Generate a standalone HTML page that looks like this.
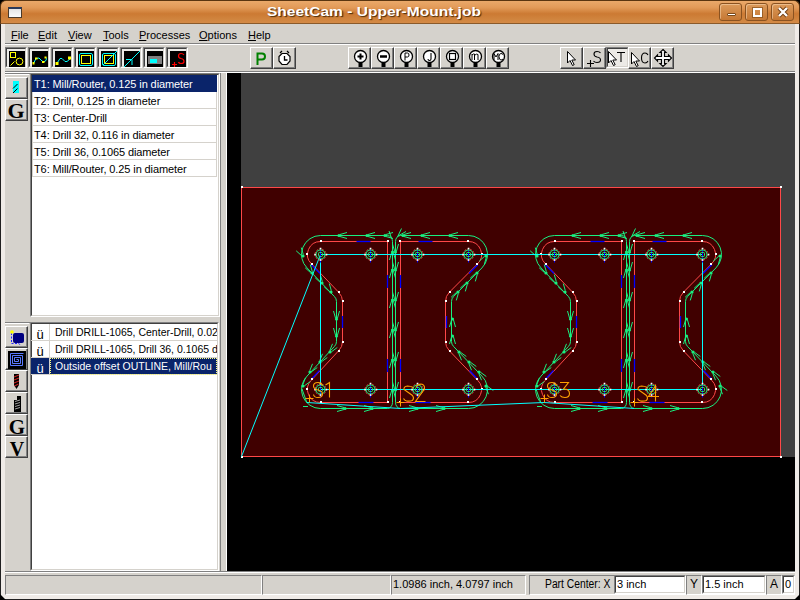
<!DOCTYPE html>
<html><head><meta charset="utf-8">
<style>
*{margin:0;padding:0;box-sizing:border-box}
html,body{width:800px;height:600px;overflow:hidden;background:#000;font-family:"Liberation Sans",sans-serif;}
.a{position:absolute}
#win{position:absolute;left:0;top:0;width:800px;height:600px;}
#bg{position:absolute;left:0;top:20px;width:800px;height:580px;background:#d5d2cc}
#title{position:absolute;left:0;top:0;width:800px;height:24px;background:linear-gradient(#eaa96a 0%,#e29a58 30%,#cc7a33 58%,#d0843e 82%,#d48a46 100%);border-radius:6px 6px 0 0;border:1px solid #5a3510;border-bottom:1px solid #8a5a2a}
#ttext{position:absolute;left:267px;top:4px;font:bold 13.5px "Liberation Sans",sans-serif;transform:scaleX(1.15);transform-origin:0 0;color:#fff;text-shadow:1px 1px 1px #4a2a08;white-space:nowrap}
.tb{position:absolute;top:3px;width:23px;height:18px;border:1px solid #8a5220;border-radius:3px;background:linear-gradient(#dc9a5a,#c57834);box-shadow:inset 1px 1px 0 rgba(255,230,200,.45)}
#lb{position:absolute;left:0;top:24px;width:5px;height:576px;background:#efebe7;border-left:1px solid #202020}
#rb{position:absolute;left:795px;top:24px;width:5px;height:576px;background:#efebe7;border-right:1px solid #202020}
#bb{position:absolute;left:0;top:595px;width:800px;height:5px;background:#efebe7;border-bottom:1px solid #202020}
.menu{position:absolute;top:29px;font-size:11px;color:#000;line-height:13px}
.menu u{text-decoration:underline;text-underline-offset:1px}
.ck{position:absolute;top:47px;width:22px;height:21px;border-top:1px solid #808080;border-left:1px solid #808080;border-right:1px solid #fff;border-bottom:1px solid #fff;background:#ecebe8}
.ck:before{content:"";position:absolute;left:0;top:0;right:0;bottom:0;border-top:1px solid #404040;border-left:1px solid #404040;border-right:1px solid #d5d2cc;border-bottom:1px solid #d5d2cc}
.ck svg{position:absolute;left:3px;top:3px}
.rb{position:absolute;top:47px;width:23px;height:22px;border-top:1px solid #fff;border-left:1px solid #fff;border-right:1px solid #404040;border-bottom:1px solid #404040;background:#d5d2cc}
.rb:before{content:"";position:absolute;left:0;top:0;right:0;bottom:0;border-right:1px solid #808080;border-bottom:1px solid #808080}
.rb svg{position:absolute;left:0;top:0}
.lt{position:absolute;left:5px;width:23px;height:23px;border-top:1px solid #fff;border-left:1px solid #fff;border-right:1px solid #404040;border-bottom:1px solid #404040;background:#d5d2cc}
.lt:before{content:"";position:absolute;left:0;top:0;right:0;bottom:0;border-right:1px solid #808080;border-bottom:1px solid #808080}
.lt svg{position:absolute;left:0;top:0}
.row{position:absolute;left:32px;width:185px;height:17px;border:1px solid #d5d2cc;border-top:none;font-size:11px;padding-left:1px;line-height:18px;white-space:nowrap;overflow:hidden;letter-spacing:-0.1px}
.sel{background:#0a246a;color:#fff;border-color:#0a246a}
.sp{position:absolute;top:575px;height:20px;border-top:1px solid #808080;border-left:1px solid #808080;border-right:1px solid #fff;border-bottom:1px solid #fff;font-size:11px;line-height:16px;white-space:nowrap}
.inp{position:absolute;top:575px;height:19px;background:#fff;border-top:1px solid #808080;border-left:1px solid #808080;border-right:1px solid #fff;border-bottom:1px solid #fff;font-size:11px;line-height:16px;padding-left:2px;white-space:nowrap;overflow:hidden}
.inp:before{content:"";position:absolute;left:0;top:0;right:0;bottom:0;border-top:1px solid #404040;border-left:1px solid #404040;border-right:1px solid #d5d2cc;border-bottom:1px solid #d5d2cc}
.sunk{position:absolute;background:#fff;border-top:1px solid #808080;border-left:1px solid #808080;border-right:1px solid #fff;border-bottom:1px solid #fff}
.sunk:before{content:"";position:absolute;left:0;top:0;right:0;bottom:0;border-top:1px solid #404040;border-left:1px solid #404040;border-right:1px solid #d5d2cc;border-bottom:1px solid #d5d2cc}
.lab{position:absolute;top:575px;height:19px;border:1px solid #fff;border-right-color:#808080;border-bottom-color:#808080;font-size:12px;line-height:17px;text-align:center}
</style></head><body>
<div id="win">
 <div id="bg"></div>
 <div id="title"></div>
 <div id="ttext">SheetCam - Upper-Mount.job</div>
 <div class="a" style="left:8px;top:7px;width:14px;height:11px;background:linear-gradient(#e4e4e4,#fafafa);border:1px solid #4a3a2a;border-top:2px solid #2a3a5a"></div>
 <div class="tb" style="left:719px"><div class="a" style="left:7px;top:9px;width:9px;height:3px;background:#fff;border:1px solid #7a4a1a;border-radius:1px"></div></div>
 <div class="tb" style="left:745px"><div class="a" style="left:7px;top:4px;width:9px;height:9px;border:2px solid #fff;outline:1px solid rgba(120,70,20,.6)"></div></div>
 <div class="tb" style="left:771px"><svg class="a" style="left:5px;top:2px" width="12" height="12"><path d="M2 2 L10 10 M10 2 L2 10" stroke="#6a3a10" stroke-width="4"/><path d="M2 2 L10 10 M10 2 L2 10" stroke="#fff" stroke-width="2.4"/></svg></div>
 <div id="lb"></div><div id="rb"></div><div id="bb"></div>
 <svg class="a" style="left:0;top:593px" width="800" height="7"><path d="M0 1 L0 7 L6 7 Z M800 1 L800 7 L794 7 Z" fill="#000"/></svg>
 <!-- menu -->
 <div class="menu" style="left:11px"><u>F</u>ile</div>
 <div class="menu" style="left:38px"><u>E</u>dit</div>
 <div class="menu" style="left:68px"><u>V</u>iew</div>
 <div class="menu" style="left:103px"><u>T</u>ools</div>
 <div class="menu" style="left:139px"><u>P</u>rocesses</div>
 <div class="menu" style="left:199px"><u>O</u>ptions</div>
 <div class="menu" style="left:248px"><u>H</u>elp</div>
 <div class="a" style="left:5px;top:43px;width:790px;height:1px;background:#808080"></div>
 <div class="a" style="left:5px;top:44px;width:790px;height:1px;background:#fff"></div>
 <div class="a" style="left:5px;top:71px;width:790px;height:1px;background:#808080"></div>
 <div class="a" style="left:5px;top:72px;width:790px;height:1px;background:#fff"></div>
<div class="ck" style="left:5px"><svg width="16" height="16" style="background:#000;left:3px;top:3px"><rect x="1.5" y="1.5" width="5" height="5" fill="none" stroke="#ffff00"/><circle cx="10.5" cy="10.5" r="3.4" fill="none" stroke="#ffff00"/><path d="M1.5 14.5 L5.5 10.5" stroke="#ffff00"/></svg></div>
<div class="ck" style="left:28px"><svg width="16" height="16" style="background:#000;left:3px;top:3px"><path d="M1.5 12.5 L4 7.5 L7 7 L10 10 L11.5 11 L14 9.5 L14.5 7.5 L13.5 6" fill="none" stroke="#00ffff"/><rect x="0.5" y="11" width="2" height="2.5" fill="#ffff00"/><rect x="3" y="6.5" width="2.5" height="2" fill="#ffff00"/><rect x="10" y="10" width="2.5" height="2" fill="#ffff00"/><rect x="12.5" y="5.5" width="2" height="2" fill="#ffff00"/></svg></div>
<div class="ck" style="left:51px"><svg width="16" height="16" style="background:#000;left:3px;top:3px"><path d="M1.5 13 L5 7.5 L7 7.5 L10 10.5 L12 10.5 L15 8" fill="none" stroke="#00ffff"/><rect x="0.5" y="11" width="3" height="3" fill="#ffff00"/><rect x="13" y="5.5" width="3" height="3" fill="#ffff00"/></svg></div>
<div class="ck" style="left:74px"><svg width="16" height="16" style="background:#000;left:3px;top:3px"><rect x="1.5" y="2.5" width="13" height="12" rx="1.5" fill="none" stroke="#00ffff"/><rect x="3.5" y="4.5" width="9" height="8" fill="none" stroke="#ffff00"/></svg></div>
<div class="ck" style="left:97px"><svg width="16" height="16" style="background:#000;left:3px;top:3px"><rect x="3.5" y="4.5" width="9" height="8" fill="none" stroke="#ffff00"/><rect x="1.5" y="2.5" width="13" height="12" rx="1.5" fill="none" stroke="#00ffff"/><path d="M2 14 L16 0" stroke="#00ffff"/></svg></div>
<div class="ck" style="left:120px"><svg width="16" height="16" style="background:#000;left:3px;top:3px"><path d="M0 16 L16 0 M2 8.5 L8 8.5 L8 14" fill="none" stroke="#00ffff"/></svg></div>
<div class="ck" style="left:143px"><svg width="16" height="16" style="background:#000;left:3px;top:3px"><rect x="1" y="5" width="14" height="8" fill="#808080"/><rect x="3" y="8" width="7" height="4" fill="#00ffff"/></svg></div>
<div class="ck" style="left:166px"><svg width="16" height="16" style="background:#000;left:3px;top:3px"><path d="M14 4 Q13 2.5 11 2.5 Q8.5 2.5 8.5 5 Q8.5 7 11 7.5 Q14 8 14 10.5 Q14 12.5 11 12.5 Q9 12.5 8.5 11" fill="none" stroke="#ff0000" stroke-width="1.2"/><path d="M2 13.5 L7 13.5 M4.5 11 L4.5 16" stroke="#ff0000" stroke-width="1.2"/></svg></div>
<div class="rb" style="left:250px"><svg width="21" height="20"><path d="M6.5 17 L6.5 5.5 L11 5.5 Q14 5.5 14 8.5 Q14 11.5 11 11.5 L6.5 11.5" fill="none" stroke="#008000" stroke-width="2"/></svg></div>
<div class="rb" style="left:273px"><svg width="21" height="20"><path d="M6 5 L8 3 M15 5 L13 3" stroke="#000" stroke-width="1.2"/><path d="M8 5.5 L13 5.5 L16 8.5 L16 13 L13 16.5 L8 16.5 L5 13 L5 8.5 Z" fill="#fff" stroke="#000" stroke-width="1.2"/><path d="M10.5 8 L10.5 12 L13.5 12" fill="none" stroke="#000" stroke-width="1.3"/></svg></div>
<div class="rb" style="left:348px"><svg width="21" height="20"><rect x="9.5" y="13" width="4" height="6" fill="#000"/><circle cx="11.5" cy="8.5" r="6" fill="#fff" stroke="#000" stroke-width="1.3"/><path d="M8.5 8.5 L14.5 8.5 M11.5 5.5 L11.5 11.5" stroke="#000" stroke-width="2"/></svg></div>
<div class="rb" style="left:371px"><svg width="21" height="20"><rect x="9.5" y="13" width="4" height="6" fill="#000"/><circle cx="11.5" cy="8.5" r="6" fill="#fff" stroke="#000" stroke-width="1.3"/><path d="M8 8.5 L15 8.5" stroke="#000" stroke-width="2.5"/></svg></div>
<div class="rb" style="left:394px"><svg width="21" height="20"><rect x="9.5" y="13" width="4" height="6" fill="#000"/><circle cx="11.5" cy="8.5" r="6" fill="#fff" stroke="#000" stroke-width="1.3"/><path d="M10 12.5 L10 5 L12.5 5 Q14 5 14 7 Q14 9 12.5 9 L10 9" fill="none" stroke="#000" stroke-width="1"/></svg></div>
<div class="rb" style="left:417px"><svg width="21" height="20"><rect x="9.5" y="13" width="4" height="6" fill="#000"/><circle cx="11.5" cy="8.5" r="6" fill="#fff" stroke="#000" stroke-width="1.3"/><path d="M13 5 L13 11 Q13 12.5 11.5 12.5 Q10 12.5 10 11" fill="none" stroke="#000" stroke-width="1.1"/></svg></div>
<div class="rb" style="left:440px"><svg width="21" height="20"><rect x="9.5" y="13" width="4" height="6" fill="#000"/><circle cx="11.5" cy="8.5" r="6" fill="#fff" stroke="#000" stroke-width="1.3"/><rect x="8.5" y="5.5" width="6" height="6" fill="none" stroke="#000" stroke-width="1.2"/></svg></div>
<div class="rb" style="left:463px"><svg width="21" height="20"><rect x="9.5" y="13" width="4" height="6" fill="#000"/><circle cx="11.5" cy="8.5" r="6" fill="#fff" stroke="#000" stroke-width="1.3"/><path d="M8 12 L8 6 M8 7 Q9.5 5.5 10.5 6 L10.5 12 M11 7 Q12.5 5.5 14 6.5 L14 12" fill="none" stroke="#000" stroke-width="1"/></svg></div>
<div class="rb" style="left:486px"><svg width="21" height="20"><rect x="9.5" y="13" width="4" height="6" fill="#000"/><circle cx="11.5" cy="8.5" r="6" fill="#fff" stroke="#000" stroke-width="1.3"/><path d="M7 12 L7 5.5 L9 9 L11 5.5 L11 12" fill="none" stroke="#000" stroke-width="1"/><path d="M16 6.5 Q15 5.5 14 5.5 Q12 5.5 12 8.5 Q12 12 14 12 Q15 12 16 11" fill="none" stroke="#000" stroke-width="1"/></svg></div>
<div class="rb" style="left:560px"><svg width="21" height="20"><g transform="translate(6,3)"><path d="M0.5 0.5 L0.5 12 L3 9.5 L5.5 14.5 L7.2 13.7 L4.8 9 L8.5 9 Z" fill="#fff" stroke="#000" stroke-width="1"/></g></svg></div>
<div class="rb" style="left:583px"><svg width="21" height="20"><path d="M16.5 5 Q15.5 3.5 13 3.5 Q10 3.5 10 6 Q10 8.5 13 9 Q16.5 9.5 16.5 12 Q16.5 14.5 13 14.5 Q10.5 14.5 9.5 13" fill="none" stroke="#000" stroke-width="1.1"/><path d="M3 15.5 L10 15.5 M6.5 12 L6.5 19" stroke="#000" stroke-width="1.1"/></svg></div>
<div class="ck" style="left:606px;width:23px;background:#eceae6"><svg width="21" height="20" style="left:-1px;top:-1px"><g transform="translate(2,4)"><path d="M0.5 0.5 L0.5 12 L3 9.5 L5.5 14.5 L7.2 13.7 L4.8 9 L8.5 9 Z" fill="#fff" stroke="#000" stroke-width="1"/></g><path d="M11 5.5 L19 5.5 M15 5.5 L15 15" stroke="#000" stroke-width="1.1"/></svg></div>
<div class="rb" style="left:628px"><svg width="21" height="20"><g transform="translate(2,4)"><path d="M0.5 0.5 L0.5 12 L3 9.5 L5.5 14.5 L7.2 13.7 L4.8 9 L8.5 9 Z" fill="#fff" stroke="#000" stroke-width="1"/></g><path d="M19 7 Q18 5 16 5 Q12.5 5 12.5 10 Q12.5 15 16 15 Q18 15 19 13" fill="none" stroke="#000" stroke-width="1.1"/></svg></div>
<div class="rb" style="left:651px"><svg width="21" height="20"><path d="M11 1.5 L14 4.5 L12.5 4.5 L12.5 8.5 L16.5 8.5 L16.5 7 L19.5 10 L16.5 13 L16.5 11.5 L12.5 11.5 L12.5 15.5 L14 15.5 L11 18.5 L8 15.5 L9.5 15.5 L9.5 11.5 L5.5 11.5 L5.5 13 L2.5 10 L5.5 7 L5.5 8.5 L9.5 8.5 L9.5 4.5 L8 4.5 Z" fill="#fff" stroke="#000" stroke-width="1.2"/></svg></div>
 <!-- canvas -->
 <div class="a" style="left:227px;top:73px;width:568px;height:498px;background:#000"></div>
 <div class="a" style="left:241px;top:73px;width:554px;height:384px;background:#404040"></div>
 <svg class="a" style="left:0;top:0" width="800" height="600" viewBox="0 0 800 600">
<defs><clipPath id="cc"><rect x="241" y="72" width="554" height="385"/></clipPath></defs>
<rect x="241.5" y="187.5" width="539" height="269" fill="#400000" stroke="#ff4848" stroke-width="1"/>
<rect x="241" y="186" width="2" height="2" fill="#fff"/>
<rect x="780" y="186" width="2" height="2" fill="#fff"/>
<rect x="241" y="456" width="2" height="2" fill="#fff"/>
<rect x="780" y="456" width="2" height="2" fill="#fff"/>
<path d="M 320.50 235.5 L 387.50 235.5 A 5 6 0 0 1 392.50 241.5 L 392.50 402.5 A 5 6 0 0 1 387.50 408.5 L 320.50 408.5 A 19 19 0 0 1 307.07 376.07 L 334.45 346.45 A 7 7 0 0 0 336.50 341.5 L 336.50 301.5 A 7 7 0 0 0 334.45 296.55 L 307.07 267.93 A 19 19 0 0 1 320.50 235.5 Z" fill="none" stroke="#18f080" stroke-width="1"/><path d="M 320.50 241.5 L 387.50 241.5 L 387.50 402.5 L 320.50 402.5 A 13 13 0 0 1 311.31 380.3 L 338.70 350.7 A 13 13 0 0 0 342.50 341.5 L 342.50 301.5 A 13 13 0 0 0 338.70 292.3 L 311.31 263.7 A 13 13 0 0 1 320.50 241.5 Z" fill="none" stroke="#ff4848" stroke-width="1"/>
<path d="M 468.50 235.5 L 400.50 235.5 A 5 6 0 0 0 395.50 241.5 L 395.50 402.5 A 5 6 0 0 0 400.50 408.5 L 468.50 408.5 A 19 19 0 0 0 481.93 376.07 L 453.55 346.45 A 7 7 0 0 1 451.50 341.5 L 451.50 301.5 A 7 7 0 0 1 453.55 296.55 L 481.93 267.93 A 19 19 0 0 0 468.50 235.5 Z" fill="none" stroke="#18f080" stroke-width="1"/><path d="M 468.50 241.5 L 400.50 241.5 L 400.50 402.5 L 468.50 402.5 A 13 13 0 0 0 477.69 380.3 L 449.30 350.7 A 13 13 0 0 1 445.50 341.5 L 445.50 301.5 A 13 13 0 0 1 449.30 292.3 L 477.69 263.7 A 13 13 0 0 0 468.50 241.5 Z" fill="none" stroke="#ff4848" stroke-width="1"/>
<path d="M 554.50 235.5 L 621.50 235.5 A 5 6 0 0 1 626.50 241.5 L 626.50 402.5 A 5 6 0 0 1 621.50 408.5 L 554.50 408.5 A 19 19 0 0 1 541.07 376.07 L 568.45 346.45 A 7 7 0 0 0 570.50 341.5 L 570.50 301.5 A 7 7 0 0 0 568.45 296.55 L 541.07 267.93 A 19 19 0 0 1 554.50 235.5 Z" fill="none" stroke="#18f080" stroke-width="1"/><path d="M 554.50 241.5 L 621.50 241.5 L 621.50 402.5 L 554.50 402.5 A 13 13 0 0 1 545.31 380.3 L 572.70 350.7 A 13 13 0 0 0 576.50 341.5 L 576.50 301.5 A 13 13 0 0 0 572.70 292.3 L 545.31 263.7 A 13 13 0 0 1 554.50 241.5 Z" fill="none" stroke="#ff4848" stroke-width="1"/>
<path d="M 702.50 235.5 L 634.50 235.5 A 5 6 0 0 0 629.50 241.5 L 629.50 402.5 A 5 6 0 0 0 634.50 408.5 L 702.50 408.5 A 19 19 0 0 0 715.93 376.07 L 687.55 346.45 A 7 7 0 0 1 685.50 341.5 L 685.50 301.5 A 7 7 0 0 1 687.55 296.55 L 715.93 267.93 A 19 19 0 0 0 702.50 235.5 Z" fill="none" stroke="#18f080" stroke-width="1"/><path d="M 702.50 241.5 L 634.50 241.5 L 634.50 402.5 L 702.50 402.5 A 13 13 0 0 0 711.69 380.3 L 683.30 350.7 A 13 13 0 0 1 679.50 341.5 L 679.50 301.5 A 13 13 0 0 1 683.30 292.3 L 711.69 263.7 A 13 13 0 0 0 702.50 241.5 Z" fill="none" stroke="#ff4848" stroke-width="1"/>
<g transform="translate(0,0)"><path d="M 387.5 275 L 387.5 288" stroke="#0000ff" stroke-width="1.3" fill="none"/><path d="M 387.5 359 L 387.5 372" stroke="#0000ff" stroke-width="1.3" fill="none"/><rect x="387" y="240" width="2" height="2" fill="#fff"/><rect x="387" y="401" width="2" height="2" fill="#fff"/><path d="M 386.0 234.5 L 393.0 232.5 M 386.0 236.5 L 393.0 238.5" fill="none" stroke="#18f080" stroke-width="1"/><circle cx="385.0" cy="235.5" r="1.6" fill="#18f080"/><path d="M 393.5 391.0 L 395.5 398.0 M 391.5 391.0 L 389.5 398.0" fill="none" stroke="#18f080" stroke-width="1"/><circle cx="392.5" cy="390.0" r="1.6" fill="#18f080"/><path d="M 393.5 361.0 L 395.5 368.0 M 391.5 361.0 L 389.5 368.0" fill="none" stroke="#18f080" stroke-width="1"/><circle cx="392.5" cy="360.0" r="1.6" fill="#18f080"/><path d="M 393.5 331.0 L 395.5 338.0 M 391.5 331.0 L 389.5 338.0" fill="none" stroke="#18f080" stroke-width="1"/><circle cx="392.5" cy="330.0" r="1.6" fill="#18f080"/><path d="M 393.5 301.0 L 395.5 308.0 M 391.5 301.0 L 389.5 308.0" fill="none" stroke="#18f080" stroke-width="1"/><circle cx="392.5" cy="300.0" r="1.6" fill="#18f080"/><path d="M 393.5 271.0 L 395.5 278.0 M 391.5 271.0 L 389.5 278.0" fill="none" stroke="#18f080" stroke-width="1"/><circle cx="392.5" cy="270.0" r="1.6" fill="#18f080"/><path d="M 393.5 253.0 L 395.5 260.0 M 391.5 253.0 L 389.5 260.0" fill="none" stroke="#18f080" stroke-width="1"/><circle cx="392.5" cy="252.0" r="1.6" fill="#18f080"/><path d="M 356.5 241.5 L 370.5 241.5" stroke="#0000ff" stroke-width="1.3" fill="none"/><path d="M 358.5 402.5 L 373.5 402.5" stroke="#0000ff" stroke-width="1.3" fill="none"/><path d="M 342.5 316 L 342.5 328" stroke="#0000ff" stroke-width="1.3" fill="none"/><path d="M 311 264.5 L 320 273.5" stroke="#0000ff" stroke-width="1.3" fill="none"/><path d="M 311 379.5 L 319.5 370.5" stroke="#0000ff" stroke-width="1.3" fill="none"/><rect x="320" y="240" width="2" height="2" fill="#fff"/><rect x="320" y="401" width="2" height="2" fill="#fff"/><rect x="306" y="253" width="2" height="2" fill="#fff"/><rect x="306" y="388" width="2" height="2" fill="#fff"/><rect x="311" y="263" width="2" height="2" fill="#fff"/><rect x="311" y="378" width="2" height="2" fill="#fff"/><rect x="338" y="291" width="2" height="2" fill="#fff"/><rect x="338" y="350" width="2" height="2" fill="#fff"/><rect x="342" y="300" width="2" height="2" fill="#fff"/><rect x="342" y="341" width="2" height="2" fill="#fff"/><path d="M 340.0 234.5 L 347.0 232.5 M 340.0 236.5 L 347.0 238.5" fill="none" stroke="#18f080" stroke-width="1"/><circle cx="339.0" cy="235.5" r="1.6" fill="#18f080"/><path d="M 368.0 234.5 L 375.0 232.5 M 368.0 236.5 L 375.0 238.5" fill="none" stroke="#18f080" stroke-width="1"/><circle cx="367.0" cy="235.5" r="1.6" fill="#18f080"/><path d="M 301.6 255.7 L 296.2 250.8 M 303.3 254.6 L 301.3 247.6" fill="none" stroke="#18f080" stroke-width="1"/><circle cx="303.0" cy="256.0" r="1.6" fill="#18f080"/><path d="M 310.6 272.7 L 305.2 267.8 M 312.3 271.6 L 310.3 264.6" fill="none" stroke="#18f080" stroke-width="1"/><circle cx="312.0" cy="273.0" r="1.6" fill="#18f080"/><path d="M 320.6 282.7 L 315.2 277.8 M 322.3 281.6 L 320.3 274.6" fill="none" stroke="#18f080" stroke-width="1"/><circle cx="322.0" cy="283.0" r="1.6" fill="#18f080"/><path d="M 329.6 291.7 L 324.2 286.8 M 331.3 290.6 L 329.3 283.6" fill="none" stroke="#18f080" stroke-width="1"/><circle cx="331.0" cy="292.0" r="1.6" fill="#18f080"/><path d="M 335.5 318.0 L 333.5 311.0 M 337.5 318.0 L 339.5 311.0" fill="none" stroke="#18f080" stroke-width="1"/><circle cx="336.5" cy="319.0" r="1.6" fill="#18f080"/><path d="M 335.5 335.0 L 333.5 328.0 M 337.5 335.0 L 339.5 328.0" fill="none" stroke="#18f080" stroke-width="1"/><circle cx="336.5" cy="336.0" r="1.6" fill="#18f080"/><path d="M 329.8 350.6 L 332.5 343.8 M 331.4 351.8 L 337.3 347.5" fill="none" stroke="#18f080" stroke-width="1"/><circle cx="330.0" cy="352.0" r="1.6" fill="#18f080"/><path d="M 319.8 360.6 L 322.5 353.8 M 321.4 361.8 L 327.3 357.5" fill="none" stroke="#18f080" stroke-width="1"/><circle cx="320.0" cy="362.0" r="1.6" fill="#18f080"/><path d="M 309.8 370.6 L 312.5 363.8 M 311.4 371.8 L 317.3 367.5" fill="none" stroke="#18f080" stroke-width="1"/><circle cx="310.0" cy="372.0" r="1.6" fill="#18f080"/><path d="M 302.8 384.6 L 305.5 377.8 M 304.4 385.8 L 310.3 381.5" fill="none" stroke="#18f080" stroke-width="1"/><circle cx="303.0" cy="386.0" r="1.6" fill="#18f080"/><path d="M 344.0 409.5 L 337.0 411.5 M 344.0 407.5 L 337.0 405.5" fill="none" stroke="#18f080" stroke-width="1"/><circle cx="345.0" cy="408.5" r="1.6" fill="#18f080"/><path d="M 371.0 409.5 L 364.0 411.5 M 371.0 407.5 L 364.0 405.5" fill="none" stroke="#18f080" stroke-width="1"/><circle cx="372.0" cy="408.5" r="1.6" fill="#18f080"/></g>
<g transform="translate(788,0) scale(-1,1)"><path d="M 387.5 275 L 387.5 288" stroke="#0000ff" stroke-width="1.3" fill="none"/><path d="M 387.5 359 L 387.5 372" stroke="#0000ff" stroke-width="1.3" fill="none"/><rect x="387" y="240" width="2" height="2" fill="#fff"/><rect x="387" y="401" width="2" height="2" fill="#fff"/><path d="M 384.0 236.5 L 377.0 238.5 M 384.0 234.5 L 377.0 232.5" fill="none" stroke="#18f080" stroke-width="1"/><circle cx="385.0" cy="235.5" r="1.6" fill="#18f080"/><path d="M 391.5 389.0 L 389.5 382.0 M 393.5 389.0 L 395.5 382.0" fill="none" stroke="#18f080" stroke-width="1"/><circle cx="392.5" cy="390.0" r="1.6" fill="#18f080"/><path d="M 391.5 359.0 L 389.5 352.0 M 393.5 359.0 L 395.5 352.0" fill="none" stroke="#18f080" stroke-width="1"/><circle cx="392.5" cy="360.0" r="1.6" fill="#18f080"/><path d="M 391.5 329.0 L 389.5 322.0 M 393.5 329.0 L 395.5 322.0" fill="none" stroke="#18f080" stroke-width="1"/><circle cx="392.5" cy="330.0" r="1.6" fill="#18f080"/><path d="M 391.5 299.0 L 389.5 292.0 M 393.5 299.0 L 395.5 292.0" fill="none" stroke="#18f080" stroke-width="1"/><circle cx="392.5" cy="300.0" r="1.6" fill="#18f080"/><path d="M 391.5 269.0 L 389.5 262.0 M 393.5 269.0 L 395.5 262.0" fill="none" stroke="#18f080" stroke-width="1"/><circle cx="392.5" cy="270.0" r="1.6" fill="#18f080"/><path d="M 391.5 251.0 L 389.5 244.0 M 393.5 251.0 L 395.5 244.0" fill="none" stroke="#18f080" stroke-width="1"/><circle cx="392.5" cy="252.0" r="1.6" fill="#18f080"/></g>
<g transform="translate(789,0) scale(-1,1)"><path d="M 356.5 241.5 L 370.5 241.5" stroke="#0000ff" stroke-width="1.3" fill="none"/><path d="M 358.5 402.5 L 373.5 402.5" stroke="#0000ff" stroke-width="1.3" fill="none"/><path d="M 342.5 316 L 342.5 328" stroke="#0000ff" stroke-width="1.3" fill="none"/><path d="M 311 264.5 L 320 273.5" stroke="#0000ff" stroke-width="1.3" fill="none"/><path d="M 311 379.5 L 319.5 370.5" stroke="#0000ff" stroke-width="1.3" fill="none"/><rect x="320" y="240" width="2" height="2" fill="#fff"/><rect x="320" y="401" width="2" height="2" fill="#fff"/><rect x="306" y="253" width="2" height="2" fill="#fff"/><rect x="306" y="388" width="2" height="2" fill="#fff"/><rect x="311" y="263" width="2" height="2" fill="#fff"/><rect x="311" y="378" width="2" height="2" fill="#fff"/><rect x="338" y="291" width="2" height="2" fill="#fff"/><rect x="338" y="350" width="2" height="2" fill="#fff"/><rect x="342" y="300" width="2" height="2" fill="#fff"/><rect x="342" y="341" width="2" height="2" fill="#fff"/><path d="M 338.0 236.5 L 331.0 238.5 M 338.0 234.5 L 331.0 232.5" fill="none" stroke="#18f080" stroke-width="1"/><circle cx="339.0" cy="235.5" r="1.6" fill="#18f080"/><path d="M 366.0 236.5 L 359.0 238.5 M 366.0 234.5 L 359.0 232.5" fill="none" stroke="#18f080" stroke-width="1"/><circle cx="367.0" cy="235.5" r="1.6" fill="#18f080"/><path d="M 304.4 256.3 L 309.8 261.2 M 302.7 257.4 L 304.7 264.4" fill="none" stroke="#18f080" stroke-width="1"/><circle cx="303.0" cy="256.0" r="1.6" fill="#18f080"/><path d="M 313.4 273.3 L 318.8 278.2 M 311.7 274.4 L 313.7 281.4" fill="none" stroke="#18f080" stroke-width="1"/><circle cx="312.0" cy="273.0" r="1.6" fill="#18f080"/><path d="M 323.4 283.3 L 328.8 288.2 M 321.7 284.4 L 323.7 291.4" fill="none" stroke="#18f080" stroke-width="1"/><circle cx="322.0" cy="283.0" r="1.6" fill="#18f080"/><path d="M 332.4 292.3 L 337.8 297.2 M 330.7 293.4 L 332.7 300.4" fill="none" stroke="#18f080" stroke-width="1"/><circle cx="331.0" cy="292.0" r="1.6" fill="#18f080"/><path d="M 337.5 320.0 L 339.5 327.0 M 335.5 320.0 L 333.5 327.0" fill="none" stroke="#18f080" stroke-width="1"/><circle cx="336.5" cy="319.0" r="1.6" fill="#18f080"/><path d="M 337.5 337.0 L 339.5 344.0 M 335.5 337.0 L 333.5 344.0" fill="none" stroke="#18f080" stroke-width="1"/><circle cx="336.5" cy="336.0" r="1.6" fill="#18f080"/><path d="M 330.2 353.4 L 327.5 360.2 M 328.6 352.2 L 322.7 356.5" fill="none" stroke="#18f080" stroke-width="1"/><circle cx="330.0" cy="352.0" r="1.6" fill="#18f080"/><path d="M 320.2 363.4 L 317.5 370.2 M 318.6 362.2 L 312.7 366.5" fill="none" stroke="#18f080" stroke-width="1"/><circle cx="320.0" cy="362.0" r="1.6" fill="#18f080"/><path d="M 310.2 373.4 L 307.5 380.2 M 308.6 372.2 L 302.7 376.5" fill="none" stroke="#18f080" stroke-width="1"/><circle cx="310.0" cy="372.0" r="1.6" fill="#18f080"/><path d="M 303.2 387.4 L 300.5 394.2 M 301.6 386.2 L 295.7 390.5" fill="none" stroke="#18f080" stroke-width="1"/><circle cx="303.0" cy="386.0" r="1.6" fill="#18f080"/><path d="M 346.0 407.5 L 353.0 405.5 M 346.0 409.5 L 353.0 411.5" fill="none" stroke="#18f080" stroke-width="1"/><circle cx="345.0" cy="408.5" r="1.6" fill="#18f080"/><path d="M 373.0 407.5 L 380.0 405.5 M 373.0 409.5 L 380.0 411.5" fill="none" stroke="#18f080" stroke-width="1"/><circle cx="372.0" cy="408.5" r="1.6" fill="#18f080"/></g>
<g transform="translate(234,0)"><path d="M 387.5 275 L 387.5 288" stroke="#0000ff" stroke-width="1.3" fill="none"/><path d="M 387.5 359 L 387.5 372" stroke="#0000ff" stroke-width="1.3" fill="none"/><rect x="387" y="240" width="2" height="2" fill="#fff"/><rect x="387" y="401" width="2" height="2" fill="#fff"/><path d="M 386.0 234.5 L 393.0 232.5 M 386.0 236.5 L 393.0 238.5" fill="none" stroke="#18f080" stroke-width="1"/><circle cx="385.0" cy="235.5" r="1.6" fill="#18f080"/><path d="M 393.5 391.0 L 395.5 398.0 M 391.5 391.0 L 389.5 398.0" fill="none" stroke="#18f080" stroke-width="1"/><circle cx="392.5" cy="390.0" r="1.6" fill="#18f080"/><path d="M 393.5 361.0 L 395.5 368.0 M 391.5 361.0 L 389.5 368.0" fill="none" stroke="#18f080" stroke-width="1"/><circle cx="392.5" cy="360.0" r="1.6" fill="#18f080"/><path d="M 393.5 331.0 L 395.5 338.0 M 391.5 331.0 L 389.5 338.0" fill="none" stroke="#18f080" stroke-width="1"/><circle cx="392.5" cy="330.0" r="1.6" fill="#18f080"/><path d="M 393.5 301.0 L 395.5 308.0 M 391.5 301.0 L 389.5 308.0" fill="none" stroke="#18f080" stroke-width="1"/><circle cx="392.5" cy="300.0" r="1.6" fill="#18f080"/><path d="M 393.5 271.0 L 395.5 278.0 M 391.5 271.0 L 389.5 278.0" fill="none" stroke="#18f080" stroke-width="1"/><circle cx="392.5" cy="270.0" r="1.6" fill="#18f080"/><path d="M 393.5 253.0 L 395.5 260.0 M 391.5 253.0 L 389.5 260.0" fill="none" stroke="#18f080" stroke-width="1"/><circle cx="392.5" cy="252.0" r="1.6" fill="#18f080"/><path d="M 356.5 241.5 L 370.5 241.5" stroke="#0000ff" stroke-width="1.3" fill="none"/><path d="M 358.5 402.5 L 373.5 402.5" stroke="#0000ff" stroke-width="1.3" fill="none"/><path d="M 342.5 316 L 342.5 328" stroke="#0000ff" stroke-width="1.3" fill="none"/><path d="M 311 264.5 L 320 273.5" stroke="#0000ff" stroke-width="1.3" fill="none"/><path d="M 311 379.5 L 319.5 370.5" stroke="#0000ff" stroke-width="1.3" fill="none"/><rect x="320" y="240" width="2" height="2" fill="#fff"/><rect x="320" y="401" width="2" height="2" fill="#fff"/><rect x="306" y="253" width="2" height="2" fill="#fff"/><rect x="306" y="388" width="2" height="2" fill="#fff"/><rect x="311" y="263" width="2" height="2" fill="#fff"/><rect x="311" y="378" width="2" height="2" fill="#fff"/><rect x="338" y="291" width="2" height="2" fill="#fff"/><rect x="338" y="350" width="2" height="2" fill="#fff"/><rect x="342" y="300" width="2" height="2" fill="#fff"/><rect x="342" y="341" width="2" height="2" fill="#fff"/><path d="M 340.0 234.5 L 347.0 232.5 M 340.0 236.5 L 347.0 238.5" fill="none" stroke="#18f080" stroke-width="1"/><circle cx="339.0" cy="235.5" r="1.6" fill="#18f080"/><path d="M 368.0 234.5 L 375.0 232.5 M 368.0 236.5 L 375.0 238.5" fill="none" stroke="#18f080" stroke-width="1"/><circle cx="367.0" cy="235.5" r="1.6" fill="#18f080"/><path d="M 301.6 255.7 L 296.2 250.8 M 303.3 254.6 L 301.3 247.6" fill="none" stroke="#18f080" stroke-width="1"/><circle cx="303.0" cy="256.0" r="1.6" fill="#18f080"/><path d="M 310.6 272.7 L 305.2 267.8 M 312.3 271.6 L 310.3 264.6" fill="none" stroke="#18f080" stroke-width="1"/><circle cx="312.0" cy="273.0" r="1.6" fill="#18f080"/><path d="M 320.6 282.7 L 315.2 277.8 M 322.3 281.6 L 320.3 274.6" fill="none" stroke="#18f080" stroke-width="1"/><circle cx="322.0" cy="283.0" r="1.6" fill="#18f080"/><path d="M 329.6 291.7 L 324.2 286.8 M 331.3 290.6 L 329.3 283.6" fill="none" stroke="#18f080" stroke-width="1"/><circle cx="331.0" cy="292.0" r="1.6" fill="#18f080"/><path d="M 335.5 318.0 L 333.5 311.0 M 337.5 318.0 L 339.5 311.0" fill="none" stroke="#18f080" stroke-width="1"/><circle cx="336.5" cy="319.0" r="1.6" fill="#18f080"/><path d="M 335.5 335.0 L 333.5 328.0 M 337.5 335.0 L 339.5 328.0" fill="none" stroke="#18f080" stroke-width="1"/><circle cx="336.5" cy="336.0" r="1.6" fill="#18f080"/><path d="M 329.8 350.6 L 332.5 343.8 M 331.4 351.8 L 337.3 347.5" fill="none" stroke="#18f080" stroke-width="1"/><circle cx="330.0" cy="352.0" r="1.6" fill="#18f080"/><path d="M 319.8 360.6 L 322.5 353.8 M 321.4 361.8 L 327.3 357.5" fill="none" stroke="#18f080" stroke-width="1"/><circle cx="320.0" cy="362.0" r="1.6" fill="#18f080"/><path d="M 309.8 370.6 L 312.5 363.8 M 311.4 371.8 L 317.3 367.5" fill="none" stroke="#18f080" stroke-width="1"/><circle cx="310.0" cy="372.0" r="1.6" fill="#18f080"/><path d="M 302.8 384.6 L 305.5 377.8 M 304.4 385.8 L 310.3 381.5" fill="none" stroke="#18f080" stroke-width="1"/><circle cx="303.0" cy="386.0" r="1.6" fill="#18f080"/><path d="M 344.0 409.5 L 337.0 411.5 M 344.0 407.5 L 337.0 405.5" fill="none" stroke="#18f080" stroke-width="1"/><circle cx="345.0" cy="408.5" r="1.6" fill="#18f080"/><path d="M 371.0 409.5 L 364.0 411.5 M 371.0 407.5 L 364.0 405.5" fill="none" stroke="#18f080" stroke-width="1"/><circle cx="372.0" cy="408.5" r="1.6" fill="#18f080"/></g>
<g transform="translate(1022,0) scale(-1,1)"><path d="M 387.5 275 L 387.5 288" stroke="#0000ff" stroke-width="1.3" fill="none"/><path d="M 387.5 359 L 387.5 372" stroke="#0000ff" stroke-width="1.3" fill="none"/><rect x="387" y="240" width="2" height="2" fill="#fff"/><rect x="387" y="401" width="2" height="2" fill="#fff"/><path d="M 384.0 236.5 L 377.0 238.5 M 384.0 234.5 L 377.0 232.5" fill="none" stroke="#18f080" stroke-width="1"/><circle cx="385.0" cy="235.5" r="1.6" fill="#18f080"/><path d="M 391.5 389.0 L 389.5 382.0 M 393.5 389.0 L 395.5 382.0" fill="none" stroke="#18f080" stroke-width="1"/><circle cx="392.5" cy="390.0" r="1.6" fill="#18f080"/><path d="M 391.5 359.0 L 389.5 352.0 M 393.5 359.0 L 395.5 352.0" fill="none" stroke="#18f080" stroke-width="1"/><circle cx="392.5" cy="360.0" r="1.6" fill="#18f080"/><path d="M 391.5 329.0 L 389.5 322.0 M 393.5 329.0 L 395.5 322.0" fill="none" stroke="#18f080" stroke-width="1"/><circle cx="392.5" cy="330.0" r="1.6" fill="#18f080"/><path d="M 391.5 299.0 L 389.5 292.0 M 393.5 299.0 L 395.5 292.0" fill="none" stroke="#18f080" stroke-width="1"/><circle cx="392.5" cy="300.0" r="1.6" fill="#18f080"/><path d="M 391.5 269.0 L 389.5 262.0 M 393.5 269.0 L 395.5 262.0" fill="none" stroke="#18f080" stroke-width="1"/><circle cx="392.5" cy="270.0" r="1.6" fill="#18f080"/><path d="M 391.5 251.0 L 389.5 244.0 M 393.5 251.0 L 395.5 244.0" fill="none" stroke="#18f080" stroke-width="1"/><circle cx="392.5" cy="252.0" r="1.6" fill="#18f080"/></g>
<g transform="translate(1023,0) scale(-1,1)"><path d="M 356.5 241.5 L 370.5 241.5" stroke="#0000ff" stroke-width="1.3" fill="none"/><path d="M 358.5 402.5 L 373.5 402.5" stroke="#0000ff" stroke-width="1.3" fill="none"/><path d="M 342.5 316 L 342.5 328" stroke="#0000ff" stroke-width="1.3" fill="none"/><path d="M 311 264.5 L 320 273.5" stroke="#0000ff" stroke-width="1.3" fill="none"/><path d="M 311 379.5 L 319.5 370.5" stroke="#0000ff" stroke-width="1.3" fill="none"/><rect x="320" y="240" width="2" height="2" fill="#fff"/><rect x="320" y="401" width="2" height="2" fill="#fff"/><rect x="306" y="253" width="2" height="2" fill="#fff"/><rect x="306" y="388" width="2" height="2" fill="#fff"/><rect x="311" y="263" width="2" height="2" fill="#fff"/><rect x="311" y="378" width="2" height="2" fill="#fff"/><rect x="338" y="291" width="2" height="2" fill="#fff"/><rect x="338" y="350" width="2" height="2" fill="#fff"/><rect x="342" y="300" width="2" height="2" fill="#fff"/><rect x="342" y="341" width="2" height="2" fill="#fff"/><path d="M 338.0 236.5 L 331.0 238.5 M 338.0 234.5 L 331.0 232.5" fill="none" stroke="#18f080" stroke-width="1"/><circle cx="339.0" cy="235.5" r="1.6" fill="#18f080"/><path d="M 366.0 236.5 L 359.0 238.5 M 366.0 234.5 L 359.0 232.5" fill="none" stroke="#18f080" stroke-width="1"/><circle cx="367.0" cy="235.5" r="1.6" fill="#18f080"/><path d="M 304.4 256.3 L 309.8 261.2 M 302.7 257.4 L 304.7 264.4" fill="none" stroke="#18f080" stroke-width="1"/><circle cx="303.0" cy="256.0" r="1.6" fill="#18f080"/><path d="M 313.4 273.3 L 318.8 278.2 M 311.7 274.4 L 313.7 281.4" fill="none" stroke="#18f080" stroke-width="1"/><circle cx="312.0" cy="273.0" r="1.6" fill="#18f080"/><path d="M 323.4 283.3 L 328.8 288.2 M 321.7 284.4 L 323.7 291.4" fill="none" stroke="#18f080" stroke-width="1"/><circle cx="322.0" cy="283.0" r="1.6" fill="#18f080"/><path d="M 332.4 292.3 L 337.8 297.2 M 330.7 293.4 L 332.7 300.4" fill="none" stroke="#18f080" stroke-width="1"/><circle cx="331.0" cy="292.0" r="1.6" fill="#18f080"/><path d="M 337.5 320.0 L 339.5 327.0 M 335.5 320.0 L 333.5 327.0" fill="none" stroke="#18f080" stroke-width="1"/><circle cx="336.5" cy="319.0" r="1.6" fill="#18f080"/><path d="M 337.5 337.0 L 339.5 344.0 M 335.5 337.0 L 333.5 344.0" fill="none" stroke="#18f080" stroke-width="1"/><circle cx="336.5" cy="336.0" r="1.6" fill="#18f080"/><path d="M 330.2 353.4 L 327.5 360.2 M 328.6 352.2 L 322.7 356.5" fill="none" stroke="#18f080" stroke-width="1"/><circle cx="330.0" cy="352.0" r="1.6" fill="#18f080"/><path d="M 320.2 363.4 L 317.5 370.2 M 318.6 362.2 L 312.7 366.5" fill="none" stroke="#18f080" stroke-width="1"/><circle cx="320.0" cy="362.0" r="1.6" fill="#18f080"/><path d="M 310.2 373.4 L 307.5 380.2 M 308.6 372.2 L 302.7 376.5" fill="none" stroke="#18f080" stroke-width="1"/><circle cx="310.0" cy="372.0" r="1.6" fill="#18f080"/><path d="M 303.2 387.4 L 300.5 394.2 M 301.6 386.2 L 295.7 390.5" fill="none" stroke="#18f080" stroke-width="1"/><circle cx="303.0" cy="386.0" r="1.6" fill="#18f080"/><path d="M 346.0 407.5 L 353.0 405.5 M 346.0 409.5 L 353.0 411.5" fill="none" stroke="#18f080" stroke-width="1"/><circle cx="345.0" cy="408.5" r="1.6" fill="#18f080"/><path d="M 373.0 407.5 L 380.0 405.5 M 373.0 409.5 L 380.0 411.5" fill="none" stroke="#18f080" stroke-width="1"/><circle cx="372.0" cy="408.5" r="1.6" fill="#18f080"/></g>
<path d="M 397.5 237 L 401.5 228.5 M 398 236 L 406 231.5 M 391.5 238 L 389 231" fill="none" stroke="#18f080" stroke-width="1"/>
<path d="M 303 406.5 L 308 406.5 M 302 389 L 307 403" fill="none" stroke="#18f080" stroke-width="1"/>
<path d="M 631.5 237 L 635.5 228.5 M 632 236 L 640 231.5 M 625.5 238 L 623 231" fill="none" stroke="#18f080" stroke-width="1"/>
<path d="M 537 406.5 L 542 406.5 M 536 389 L 541 403" fill="none" stroke="#18f080" stroke-width="1"/>
<path d="M 241.5 456.5 L 320.5 254.5 L 702.5 254.5 L 702.5 389.5 L 320.5 389.5 L 320.5 254.5" fill="none" stroke="#00ffff" stroke-width="1"/>
<path d="M 307 402.5 L 400.5 408.5 L 544 402.5 L 634.5 408.5" fill="none" stroke="#00ffff" stroke-width="1"/>
<path d="M 320.5 249.5 L 320.5 262.5" stroke="#0000ff" stroke-width="1"/>
<circle cx="320.5" cy="254.5" r="5.5" fill="none" stroke="#ff4848" stroke-width="1" stroke-dasharray="1.5 1.5"/>
<circle cx="320.5" cy="254.5" r="4.5" fill="none" stroke="#18f080" stroke-width="1.1"/>
<rect x="318.5" y="252.5" width="4" height="4" rx="1" fill="none" stroke="#18f080" stroke-width="1"/>
<rect x="319.75" y="247.75" width="1.6" height="1.6" fill="#fff"/>
<rect x="325.75" y="253.75" width="1.6" height="1.6" fill="#fff"/>
<rect x="319.75" y="259.25" width="1.6" height="1.6" fill="#fff"/>
<rect x="314.25" y="253.75" width="1.6" height="1.6" fill="#fff"/>
<path d="M 320.5 384.5 L 320.5 397.5" stroke="#0000ff" stroke-width="1"/>
<circle cx="320.5" cy="389.5" r="5.5" fill="none" stroke="#ff4848" stroke-width="1" stroke-dasharray="1.5 1.5"/>
<circle cx="320.5" cy="389.5" r="4.5" fill="none" stroke="#18f080" stroke-width="1.1"/>
<rect x="318.5" y="387.5" width="4" height="4" rx="1" fill="none" stroke="#18f080" stroke-width="1"/>
<rect x="319.75" y="382.75" width="1.6" height="1.6" fill="#fff"/>
<rect x="325.75" y="388.75" width="1.6" height="1.6" fill="#fff"/>
<rect x="319.75" y="394.25" width="1.6" height="1.6" fill="#fff"/>
<rect x="314.25" y="388.75" width="1.6" height="1.6" fill="#fff"/>
<path d="M 554.5 249.5 L 554.5 262.5" stroke="#0000ff" stroke-width="1"/>
<circle cx="554.5" cy="254.5" r="5.5" fill="none" stroke="#ff4848" stroke-width="1" stroke-dasharray="1.5 1.5"/>
<circle cx="554.5" cy="254.5" r="4.5" fill="none" stroke="#18f080" stroke-width="1.1"/>
<rect x="552.5" y="252.5" width="4" height="4" rx="1" fill="none" stroke="#18f080" stroke-width="1"/>
<rect x="553.75" y="247.75" width="1.6" height="1.6" fill="#fff"/>
<rect x="559.75" y="253.75" width="1.6" height="1.6" fill="#fff"/>
<rect x="553.75" y="259.25" width="1.6" height="1.6" fill="#fff"/>
<rect x="548.25" y="253.75" width="1.6" height="1.6" fill="#fff"/>
<path d="M 554.5 384.5 L 554.5 397.5" stroke="#0000ff" stroke-width="1"/>
<circle cx="554.5" cy="389.5" r="5.5" fill="none" stroke="#ff4848" stroke-width="1" stroke-dasharray="1.5 1.5"/>
<circle cx="554.5" cy="389.5" r="4.5" fill="none" stroke="#18f080" stroke-width="1.1"/>
<rect x="552.5" y="387.5" width="4" height="4" rx="1" fill="none" stroke="#18f080" stroke-width="1"/>
<rect x="553.75" y="382.75" width="1.6" height="1.6" fill="#fff"/>
<rect x="559.75" y="388.75" width="1.6" height="1.6" fill="#fff"/>
<rect x="553.75" y="394.25" width="1.6" height="1.6" fill="#fff"/>
<rect x="548.25" y="388.75" width="1.6" height="1.6" fill="#fff"/>
<path d="M 370.5 249.5 L 370.5 262.5" stroke="#0000ff" stroke-width="1"/>
<circle cx="370.5" cy="254.5" r="5.5" fill="none" stroke="#ff4848" stroke-width="1" stroke-dasharray="1.5 1.5"/>
<circle cx="370.5" cy="254.5" r="4.5" fill="none" stroke="#18f080" stroke-width="1.1"/>
<rect x="368.5" y="252.5" width="4" height="4" rx="1" fill="none" stroke="#18f080" stroke-width="1"/>
<rect x="369.75" y="247.75" width="1.6" height="1.6" fill="#fff"/>
<rect x="375.75" y="253.75" width="1.6" height="1.6" fill="#fff"/>
<rect x="369.75" y="259.25" width="1.6" height="1.6" fill="#fff"/>
<rect x="364.25" y="253.75" width="1.6" height="1.6" fill="#fff"/>
<path d="M 370.5 384.5 L 370.5 397.5" stroke="#0000ff" stroke-width="1"/>
<circle cx="370.5" cy="389.5" r="5.5" fill="none" stroke="#ff4848" stroke-width="1" stroke-dasharray="1.5 1.5"/>
<circle cx="370.5" cy="389.5" r="4.5" fill="none" stroke="#18f080" stroke-width="1.1"/>
<rect x="368.5" y="387.5" width="4" height="4" rx="1" fill="none" stroke="#18f080" stroke-width="1"/>
<rect x="369.75" y="382.75" width="1.6" height="1.6" fill="#fff"/>
<rect x="375.75" y="388.75" width="1.6" height="1.6" fill="#fff"/>
<rect x="369.75" y="394.25" width="1.6" height="1.6" fill="#fff"/>
<rect x="364.25" y="388.75" width="1.6" height="1.6" fill="#fff"/>
<path d="M 604.5 249.5 L 604.5 262.5" stroke="#0000ff" stroke-width="1"/>
<circle cx="604.5" cy="254.5" r="5.5" fill="none" stroke="#ff4848" stroke-width="1" stroke-dasharray="1.5 1.5"/>
<circle cx="604.5" cy="254.5" r="4.5" fill="none" stroke="#18f080" stroke-width="1.1"/>
<rect x="602.5" y="252.5" width="4" height="4" rx="1" fill="none" stroke="#18f080" stroke-width="1"/>
<rect x="603.75" y="247.75" width="1.6" height="1.6" fill="#fff"/>
<rect x="609.75" y="253.75" width="1.6" height="1.6" fill="#fff"/>
<rect x="603.75" y="259.25" width="1.6" height="1.6" fill="#fff"/>
<rect x="598.25" y="253.75" width="1.6" height="1.6" fill="#fff"/>
<path d="M 604.5 384.5 L 604.5 397.5" stroke="#0000ff" stroke-width="1"/>
<circle cx="604.5" cy="389.5" r="5.5" fill="none" stroke="#ff4848" stroke-width="1" stroke-dasharray="1.5 1.5"/>
<circle cx="604.5" cy="389.5" r="4.5" fill="none" stroke="#18f080" stroke-width="1.1"/>
<rect x="602.5" y="387.5" width="4" height="4" rx="1" fill="none" stroke="#18f080" stroke-width="1"/>
<rect x="603.75" y="382.75" width="1.6" height="1.6" fill="#fff"/>
<rect x="609.75" y="388.75" width="1.6" height="1.6" fill="#fff"/>
<rect x="603.75" y="394.25" width="1.6" height="1.6" fill="#fff"/>
<rect x="598.25" y="388.75" width="1.6" height="1.6" fill="#fff"/>
<path d="M 417.5 249.5 L 417.5 262.5" stroke="#0000ff" stroke-width="1"/>
<circle cx="417.5" cy="254.5" r="5.5" fill="none" stroke="#ff4848" stroke-width="1" stroke-dasharray="1.5 1.5"/>
<circle cx="417.5" cy="254.5" r="4.5" fill="none" stroke="#18f080" stroke-width="1.1"/>
<rect x="415.5" y="252.5" width="4" height="4" rx="1" fill="none" stroke="#18f080" stroke-width="1"/>
<rect x="416.75" y="247.75" width="1.6" height="1.6" fill="#fff"/>
<rect x="422.75" y="253.75" width="1.6" height="1.6" fill="#fff"/>
<rect x="416.75" y="259.25" width="1.6" height="1.6" fill="#fff"/>
<rect x="411.25" y="253.75" width="1.6" height="1.6" fill="#fff"/>
<path d="M 417.5 384.5 L 417.5 397.5" stroke="#0000ff" stroke-width="1"/>
<circle cx="417.5" cy="389.5" r="5.5" fill="none" stroke="#ff4848" stroke-width="1" stroke-dasharray="1.5 1.5"/>
<circle cx="417.5" cy="389.5" r="4.5" fill="none" stroke="#18f080" stroke-width="1.1"/>
<rect x="415.5" y="387.5" width="4" height="4" rx="1" fill="none" stroke="#18f080" stroke-width="1"/>
<rect x="416.75" y="382.75" width="1.6" height="1.6" fill="#fff"/>
<rect x="422.75" y="388.75" width="1.6" height="1.6" fill="#fff"/>
<rect x="416.75" y="394.25" width="1.6" height="1.6" fill="#fff"/>
<rect x="411.25" y="388.75" width="1.6" height="1.6" fill="#fff"/>
<path d="M 651.5 249.5 L 651.5 262.5" stroke="#0000ff" stroke-width="1"/>
<circle cx="651.5" cy="254.5" r="5.5" fill="none" stroke="#ff4848" stroke-width="1" stroke-dasharray="1.5 1.5"/>
<circle cx="651.5" cy="254.5" r="4.5" fill="none" stroke="#18f080" stroke-width="1.1"/>
<rect x="649.5" y="252.5" width="4" height="4" rx="1" fill="none" stroke="#18f080" stroke-width="1"/>
<rect x="650.75" y="247.75" width="1.6" height="1.6" fill="#fff"/>
<rect x="656.75" y="253.75" width="1.6" height="1.6" fill="#fff"/>
<rect x="650.75" y="259.25" width="1.6" height="1.6" fill="#fff"/>
<rect x="645.25" y="253.75" width="1.6" height="1.6" fill="#fff"/>
<path d="M 651.5 384.5 L 651.5 397.5" stroke="#0000ff" stroke-width="1"/>
<circle cx="651.5" cy="389.5" r="5.5" fill="none" stroke="#ff4848" stroke-width="1" stroke-dasharray="1.5 1.5"/>
<circle cx="651.5" cy="389.5" r="4.5" fill="none" stroke="#18f080" stroke-width="1.1"/>
<rect x="649.5" y="387.5" width="4" height="4" rx="1" fill="none" stroke="#18f080" stroke-width="1"/>
<rect x="650.75" y="382.75" width="1.6" height="1.6" fill="#fff"/>
<rect x="656.75" y="388.75" width="1.6" height="1.6" fill="#fff"/>
<rect x="650.75" y="394.25" width="1.6" height="1.6" fill="#fff"/>
<rect x="645.25" y="388.75" width="1.6" height="1.6" fill="#fff"/>
<path d="M 468.5 249.5 L 468.5 262.5" stroke="#0000ff" stroke-width="1"/>
<circle cx="468.5" cy="254.5" r="5.5" fill="none" stroke="#ff4848" stroke-width="1" stroke-dasharray="1.5 1.5"/>
<circle cx="468.5" cy="254.5" r="4.5" fill="none" stroke="#18f080" stroke-width="1.1"/>
<rect x="466.5" y="252.5" width="4" height="4" rx="1" fill="none" stroke="#18f080" stroke-width="1"/>
<rect x="467.75" y="247.75" width="1.6" height="1.6" fill="#fff"/>
<rect x="473.75" y="253.75" width="1.6" height="1.6" fill="#fff"/>
<rect x="467.75" y="259.25" width="1.6" height="1.6" fill="#fff"/>
<rect x="462.25" y="253.75" width="1.6" height="1.6" fill="#fff"/>
<path d="M 468.5 384.5 L 468.5 397.5" stroke="#0000ff" stroke-width="1"/>
<circle cx="468.5" cy="389.5" r="5.5" fill="none" stroke="#ff4848" stroke-width="1" stroke-dasharray="1.5 1.5"/>
<circle cx="468.5" cy="389.5" r="4.5" fill="none" stroke="#18f080" stroke-width="1.1"/>
<rect x="466.5" y="387.5" width="4" height="4" rx="1" fill="none" stroke="#18f080" stroke-width="1"/>
<rect x="467.75" y="382.75" width="1.6" height="1.6" fill="#fff"/>
<rect x="473.75" y="388.75" width="1.6" height="1.6" fill="#fff"/>
<rect x="467.75" y="394.25" width="1.6" height="1.6" fill="#fff"/>
<rect x="462.25" y="388.75" width="1.6" height="1.6" fill="#fff"/>
<path d="M 702.5 249.5 L 702.5 262.5" stroke="#0000ff" stroke-width="1"/>
<circle cx="702.5" cy="254.5" r="5.5" fill="none" stroke="#ff4848" stroke-width="1" stroke-dasharray="1.5 1.5"/>
<circle cx="702.5" cy="254.5" r="4.5" fill="none" stroke="#18f080" stroke-width="1.1"/>
<rect x="700.5" y="252.5" width="4" height="4" rx="1" fill="none" stroke="#18f080" stroke-width="1"/>
<rect x="701.75" y="247.75" width="1.6" height="1.6" fill="#fff"/>
<rect x="707.75" y="253.75" width="1.6" height="1.6" fill="#fff"/>
<rect x="701.75" y="259.25" width="1.6" height="1.6" fill="#fff"/>
<rect x="696.25" y="253.75" width="1.6" height="1.6" fill="#fff"/>
<path d="M 702.5 384.5 L 702.5 397.5" stroke="#0000ff" stroke-width="1"/>
<circle cx="702.5" cy="389.5" r="5.5" fill="none" stroke="#ff4848" stroke-width="1" stroke-dasharray="1.5 1.5"/>
<circle cx="702.5" cy="389.5" r="4.5" fill="none" stroke="#18f080" stroke-width="1.1"/>
<rect x="700.5" y="387.5" width="4" height="4" rx="1" fill="none" stroke="#18f080" stroke-width="1"/>
<rect x="701.75" y="382.75" width="1.6" height="1.6" fill="#fff"/>
<rect x="707.75" y="388.75" width="1.6" height="1.6" fill="#fff"/>
<rect x="701.75" y="394.25" width="1.6" height="1.6" fill="#fff"/>
<rect x="696.25" y="388.75" width="1.6" height="1.6" fill="#fff"/>
<path d="M 322.5 385.5 Q 321.5 382.5 318.0 382.5 Q 313.5 382.5 313.5 386.0 Q 313.5 389.0 318.0 390.0 Q 322.5 391.0 322.5 394.0 Q 322.5 397.5 318.0 397.5 Q 314.0 397.5 313.5 394.5 M 325.5 385 L 329.5 382.5 L 329.5 397.5" fill="none" stroke="#ffa000" stroke-width="1.1"/>
<path d="M 413.5 387.5 Q 410.5 386 407.5 386 Q 403.5 386.5 404.0 389.5 L 412.5 395.5 Q 414.5 398 412.5 400.5 Q 409.5 401.5 406.5 401 Q 404.5 400.5 403.5 398.5 M 416 387 Q 418 384 421 384 Q 425 384.5 424.5 389 L 415.5 401.5 L 425.5 401.5" fill="none" stroke="#ffa000" stroke-width="1.1"/>
<path d="M 556.5 385.5 Q 555.5 382.5 552.0 382.5 Q 547.5 382.5 547.5 386.0 Q 547.5 389.0 552.0 390.0 Q 556.5 391.0 556.5 394.0 Q 556.5 397.5 552.0 397.5 Q 548.0 397.5 547.5 394.5 M 560 382.5 L 568.5 382.5 L 563.5 389 Q 569.5 389 569.5 393.5 Q 569.5 397.5 565 397.5 Q 561.5 397.5 560 395.5" fill="none" stroke="#ffa000" stroke-width="1.1"/>
<path d="M 647.5 387.5 Q 644.5 386 641.5 386 Q 637.5 386.5 638.0 389.5 L 646.5 395.5 Q 648.5 398 646.5 400.5 Q 643.5 401.5 640.5 401 Q 638.5 400.5 637.5 398.5 M 655.5 384.5 L 655.5 401.5 M 655.5 386 L 648.5 396.5 L 659 396.5" fill="none" stroke="#ffa000" stroke-width="1.1"/>
<path d="M 305.5 398.5 L 313.5 398.5 M 309.5 394.5 L 309.5 402.5" stroke="#ffa000" stroke-width="1"/>
<path d="M 396.5 402.5 L 404.5 402.5 M 400.5 398.5 L 400.5 406.5" stroke="#ffa000" stroke-width="1"/>
<path d="M 540.5 398.5 L 548.5 398.5 M 544.5 394.5 L 544.5 402.5" stroke="#ffa000" stroke-width="1"/>
<path d="M 630.5 402.5 L 638.5 402.5 M 634.5 398.5 L 634.5 406.5" stroke="#ffa000" stroke-width="1"/>
</svg>

 <!-- left panels -->
 <div class="a" style="left:220px;top:73px;width:1px;height:498px;background:#808080"></div>
 <div class="a" style="left:226px;top:73px;width:1px;height:498px;background:#fff"></div>
 <div class="sunk" style="left:30px;top:73px;width:190px;height:244px"></div>
 <div class="sunk" style="left:30px;top:322px;width:189px;height:249px"></div>
 <div class="a" style="left:5px;top:73px;width:25px;height:1px;background:#808080"></div>
 <div class="a" style="left:5px;top:74px;width:24px;height:1px;background:#fff"></div>
 <div class="a" style="left:5px;top:322px;width:25px;height:1px;background:#808080"></div>
 <div class="a" style="left:5px;top:323px;width:24px;height:1px;background:#fff"></div>
<div class="lt" style="top:77px;height:22px"><svg width="21" height="21"><rect x="7" y="3" width="6" height="12" fill="#00ffff"/><path d="M7 10.5 L11.5 6 M7 15 L11.5 10.5" stroke="#000" stroke-width="1"/></svg></div>
<div class="lt" style="top:99px;height:22px"><svg width="21" height="21"><text x="10" y="18" text-anchor="middle" font-family="Liberation Serif" font-weight="bold" font-size="22">G</text></svg></div>
<div class="row sel" style="top:75px">T1: Mill/Router, 0.125 in diameter</div>
<div class="row" style="top:92px">T2: Drill, 0.125 in diameter</div>
<div class="row" style="top:109px">T3: Center-Drill</div>
<div class="row" style="top:126px">T4: Drill 32, 0.116 in diameter</div>
<div class="row" style="top:143px">T5: Drill 36, 0.1065 diameter</div>
<div class="row" style="top:160px">T6: Mill/Router, 0.25 in diameter</div>
<div class="lt" style="top:326px;height:22px"><svg width="21" height="21"><rect x="7" y="6" width="11" height="10" rx="2" fill="#000080"/><path d="M5.5 6 L5.5 16.5 L13 16.5 L14 18" fill="none" stroke="#2020ff" stroke-dasharray="2 1.5"/><circle cx="6" cy="5" r="1.8" fill="#ffff00"/></svg></div>
<div class="lt" style="top:348px;height:22px"><svg width="21" height="21"><rect x="2" y="2" width="18" height="18" fill="#000"/><path d="M10.5 10.5 H12.5 V12.5 H8.5 V8.5 H14.5 V14.5 H6.5 V6.5 H16.5 V16.5 H4.5 V4.5 H17.5" fill="none" stroke="#5a7aff" stroke-width="1"/></svg></div>
<div class="lt" style="top:370px;height:22px"><svg width="21" height="21"><path d="M8 3 L13 3 L13 14 L10.5 18 L8 14 Z" fill="#000"/><path d="M8 6 L13 4 M8 9 L13 7 M8 12 L13 10 M8.5 15 L12.5 13" stroke="#c02020" stroke-width="1.2"/></svg></div>
<div class="lt" style="top:392px;height:22px"><svg width="21" height="21"><rect x="8" y="3" width="7" height="16" fill="#000"/><rect x="8" y="3" width="3" height="4" fill="#d5d2cc"/><path d="M9 8.5 L14 7 M9 11 L14 9.5 M9 13.5 L14 12 M9 16 L14 14.5" stroke="#a0a0a0" stroke-width="1"/></svg></div>
<div class="lt" style="top:414px;height:22px"><svg width="21" height="21"><text x="11" y="18.5" text-anchor="middle" font-family="Liberation Serif" font-weight="bold" font-size="21">G</text></svg></div>
<div class="lt" style="top:436px;height:22px"><svg width="21" height="21"><text x="11" y="18.5" text-anchor="middle" font-family="Liberation Serif" font-weight="bold" font-size="20">V</text></svg></div>
<div class="a" style="left:31px;top:324px;width:19px;height:17px;border-right:1px solid #d5d2cc;border-bottom:1px solid #d5d2cc;font-size:13px;line-height:18px;text-align:center"><span style="position:relative;top:1.5px">ü</span></div>
<div class="a" style="left:50px;top:324px;width:167px;height:17px;border-bottom:1px solid #d5d2cc;font-size:10.5px;line-height:17px;padding-left:5px;white-space:nowrap;overflow:hidden">Drill DRILL-1065, Center-Drill, 0.02</div>
<div class="a" style="left:31px;top:341px;width:19px;height:17px;border-right:1px solid #d5d2cc;border-bottom:1px solid #d5d2cc;font-size:13px;line-height:18px;text-align:center"><span style="position:relative;top:1.5px">ü</span></div>
<div class="a" style="left:50px;top:341px;width:167px;height:17px;border-bottom:1px solid #d5d2cc;font-size:10.5px;line-height:17px;padding-left:5px;white-space:nowrap;overflow:hidden">Drill DRILL-1065, Drill 36, 0.1065 d</div>
<div class="a" style="left:31px;top:358px;width:19px;height:17px;border-right:1px solid #d5d2cc;border-bottom:1px solid #d5d2cc;background:#0a246a;color:#fff;font-size:13px;line-height:18px;text-align:center"><span style="position:relative;top:1.5px">ü</span></div>
<div class="a" style="left:50px;top:358px;width:167px;height:17px;border-bottom:1px solid #d5d2cc;background:#0a246a;color:#fff;outline:1px dotted #ffff80;outline-offset:-1px;font-size:10.5px;line-height:17px;padding-left:5px;white-space:nowrap;overflow:hidden">Outside offset OUTLINE, Mill/Rou</div>

 <!-- status bar -->
 <div class="a" style="left:5px;top:571px;width:790px;height:1px;background:#808080"></div>
 <div class="a" style="left:5px;top:572px;width:790px;height:1px;background:#fff"></div>
<div class="sp" style="left:5px;width:257px"></div>
<div class="sp" style="left:262px;width:129px"></div>
<div class="sp" style="left:391px;width:135px;padding-left:1px">1.0986 inch, 4.0797 inch</div>
<div class="sp" style="left:529px;width:266px;padding-left:15px;font-size:12px;line-height:17px"><span style="display:inline-block;transform:scaleX(0.86);transform-origin:0 0">Part Center: X</span></div>
<div class="inp" style="left:614px;width:72px">3 inch</div>
<div class="sp" style="left:686px;width:16px;font-size:12px;line-height:17px;text-align:center">Y</div>
<div class="inp" style="left:702px;width:64px">1.5 inch</div>
<div class="sp" style="left:766px;width:16px;font-size:12px;line-height:17px;text-align:center">A</div>
<div class="inp" style="left:782px;width:13px">0</div>
</div>
</body></html>
